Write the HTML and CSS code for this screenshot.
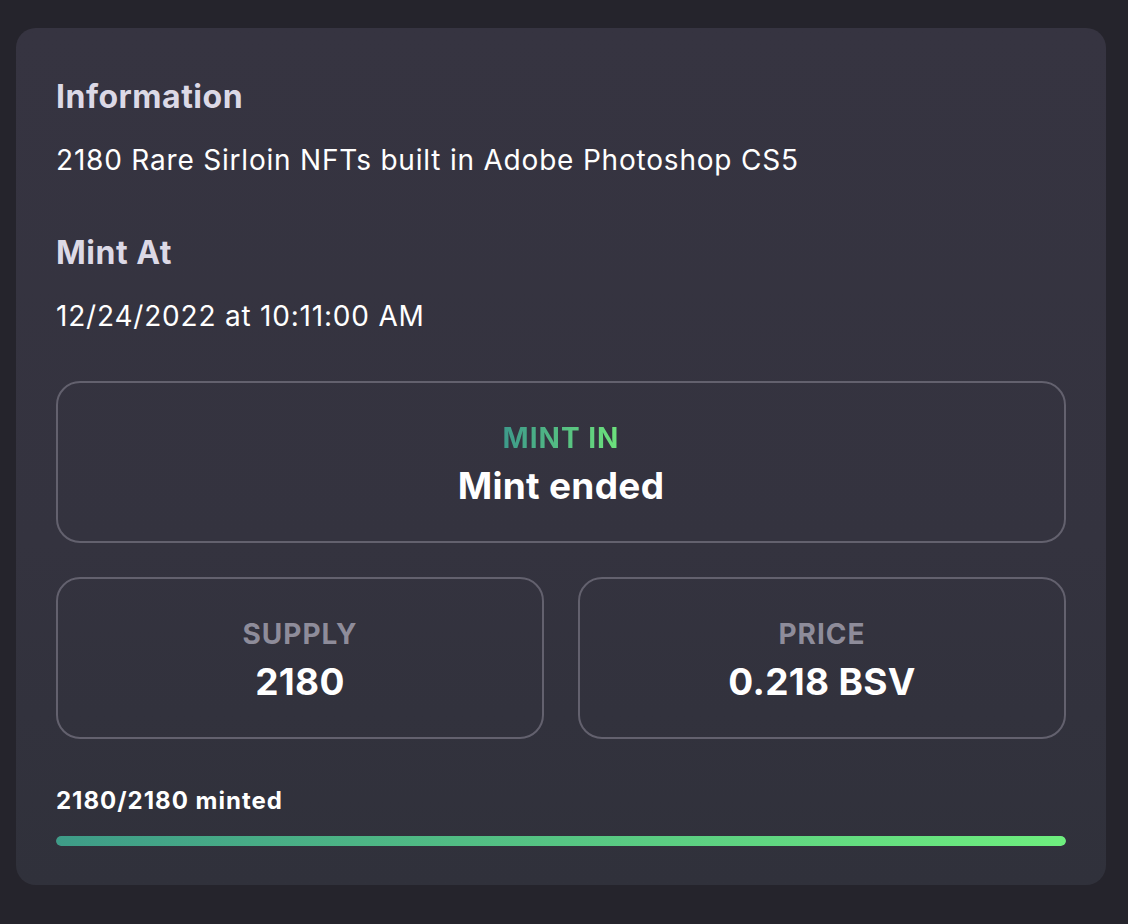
FILE: index.html
```html
<!DOCTYPE html>
<html>
<head>
<meta charset="utf-8">
<link rel="stylesheet" href="styles.css">
</head>
<body>
<div class="card">
  <h2 class="heading">Information</h2>
  <p class="text info-text">2180 Rare Sirloin NFTs built in Adobe Photoshop CS5</p>
  <h2 class="heading heading-mint">Mint At</h2>
  <p class="text date-text">12/24/2022 at 10:11:00 AM</p>
  <div class="stat stat-wide">
    <div class="stat-label gradient-label">MINT IN</div>
    <div class="stat-value">Mint ended</div>
  </div>
  <div class="stat-row">
    <div class="stat">
      <div class="stat-label">SUPPLY</div>
      <div class="stat-value">2180</div>
    </div>
    <div class="stat">
      <div class="stat-label">PRICE</div>
      <div class="stat-value">0.218 BSV</div>
    </div>
  </div>
  <div class="minted">2180/2180 minted</div>
  <div class="bar"><div class="bar-fill" style="width:100%"></div></div>
</div>
</body>
</html>
```
FILE: styles.css
```css
html, body {
  margin: 0;
  padding: 0;
  background: #25242c;
}
body {
  font-family: "Inter", "Noto Sans", sans-serif;
  padding: 28px 22px 39px 16px;
}
.card {
  background: linear-gradient(180deg, #363441 0%, #34333f 60%, #30313b 100%);
  border-radius: 20px;
  padding: 51px 40px 39px;
  display: flex;
  flex-direction: column;
}
.heading {
  margin: 0;
  font-size: 32px;
  line-height: 36px;
  font-weight: 700;
  letter-spacing: 0.5px;
  color: #dcd9e6;
}
.heading-mint {
  margin-top: 59px;
}
.text {
  margin: 0;
  font-size: 28px;
  line-height: 32px;
  letter-spacing: 0.8px;
  color: #ffffff;
}
.info-text {
  margin-top: 29px;
}
.date-text {
  margin-top: 29px;
}
.stat {
  box-sizing: border-box;
  height: 162px;
  padding-top: 6px;
  border: 2px solid #63616e;
  border-radius: 24px;
  display: flex;
  flex-direction: column;
  align-items: center;
  justify-content: center;
  gap: 10px;
}
.stat-wide {
  margin-top: 49px;
}
.stat-row {
  margin-top: 34px;
  display: grid;
  grid-template-columns: 1fr 1fr;
  gap: 34px;
}
.stat-label {
  font-size: 28px;
  line-height: 32px;
  font-weight: 700;
  letter-spacing: 1px;
  color: #8e8c9a;
}
.gradient-label {
  background: linear-gradient(90deg, #3d9a8a, #6de27c);
  -webkit-background-clip: text;
  background-clip: text;
  color: transparent;
}
.stat-value {
  font-size: 37px;
  line-height: 44px;
  font-weight: 700;
  letter-spacing: 0.3px;
  color: #ffffff;
}
.minted {
  margin-top: 48px;
  font-size: 24px;
  line-height: 28px;
  font-weight: 700;
  letter-spacing: 1px;
  color: #ffffff;
}
.bar {
  margin-top: 21px;
  height: 10px;
  border-radius: 5px;
  background: #4a4856;
  overflow: hidden;
}
.bar-fill {
  height: 100%;
  border-radius: 5px;
  background: linear-gradient(90deg, #3e9c88, #6eee7e);
}
```
